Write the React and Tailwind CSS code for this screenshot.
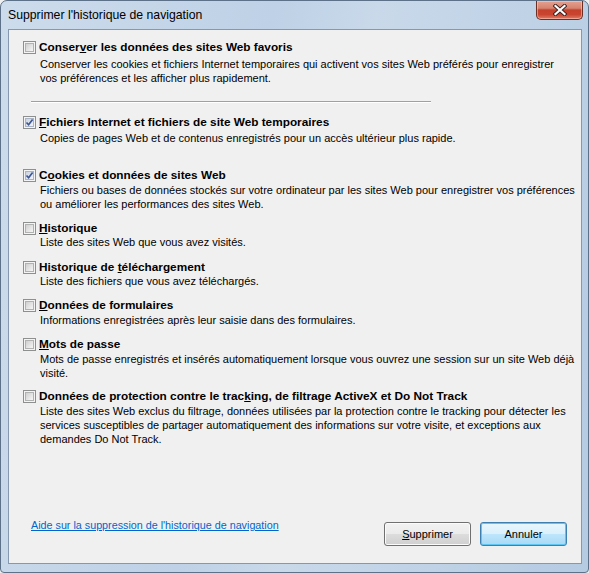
import React from 'react'

const ITEMS = [
  {
    gap: 'mt-0',
    descGap: 'mt-[3px]',
    checked: false,
    label: ['Conser', 'v', 'er les données des sites Web favoris'],
    desc: [
      'Conserver les cookies et fichiers Internet temporaires qui activent vos sites Web préférés pour enregistrer',
      'vos préférences et les afficher plus rapidement.',
    ],
  },
  {
    gap: 'mt-[12px]',
    descGap: 'mt-[2px]',
    checked: true,
    label: ['', 'F', 'ichiers Internet et fichiers de site Web temporaires'],
    desc: ['Copies de pages Web et de contenus enregistrés pour un accès ultérieur plus rapide.'],
  },
  {
    gap: 'mt-[23px]',
    descGap: 'mt-px',
    checked: true,
    label: ['C', 'o', 'okies et données de sites Web'],
    desc: [
      'Fichiers ou bases de données stockés sur votre ordinateur par les sites Web pour enregistrer vos préférences',
      'ou améliorer les performances des sites Web.',
    ],
  },
  {
    gap: 'mt-[10px]',
    descGap: 'mt-0',
    checked: false,
    label: ['', 'H', 'istorique'],
    desc: ['Liste des sites Web que vous avez visités.'],
  },
  {
    gap: 'mt-[11px]',
    descGap: 'mt-0',
    checked: false,
    label: ['Historique de ', 't', 'éléchargement'],
    desc: ['Liste des fichiers que vous avez téléchargés.'],
  },
  {
    gap: 'mt-[10px]',
    descGap: 'mt-px',
    checked: false,
    label: ['', 'D', 'onnées de formulaires'],
    desc: ['Informations enregistrées après leur saisie dans des formulaires.'],
  },
  {
    gap: 'mt-[10px]',
    descGap: 'mt-px',
    checked: false,
    label: ['', 'M', 'ots de passe'],
    desc: [
      'Mots de passe enregistrés et insérés automatiquement lorsque vous ouvrez une session sur un site Web déjà',
      'visité.',
    ],
  },
  {
    gap: 'mt-[9px]',
    descGap: 'mt-px',
    checked: false,
    label: ['Données de protection contre le trac', 'k', 'ing, de filtrage ActiveX et Do Not Track'],
    desc: [
      'Liste des sites Web exclus du filtrage, données utilisées par la protection contre le tracking pour détecter les',
      'services susceptibles de partager automatiquement des informations sur votre visite, et exceptions aux',
      'demandes Do Not Track.',
    ],
  },
]

export default function App() {
  return (
    <div className="h-[573px] w-[589px] overflow-hidden bg-[#f0f0f0] font-['Liberation_Sans',Arial,sans-serif] text-[11px] text-black">
      <div className="flex h-full flex-col rounded-t-[7px] rounded-b-[4px] border border-[#5d7189] bg-[linear-gradient(100deg,#cddcec_0%,#bed1e6_40%,#c9d9ea_55%,#b5cbe2_100%)]">
        <div className="flex h-[28px] shrink-0 items-start justify-between">
          <div className="pl-[7px] pt-[7px] text-[12.25px] leading-[15px]">Supprimer l'historique de navigation</div>
          <CloseButton />
        </div>

        <div className="ml-[7px] flex h-[535px] w-[574px] flex-col border border-[#8598af] bg-[#f0f0f0]">
          <div className="pt-[10px]">
            {ITEMS.map((item, i) => (
              <React.Fragment key={i}>
                {i === 1 && (
                  <div className="ml-[22px] mt-[16px] h-[2px] w-[400px] border-t border-b border-t-[#a0a0a0] border-b-white" />
                )}
                <Option item={item} />
              </React.Fragment>
            ))}
          </div>

          <div className="mt-auto flex items-start justify-between pb-[17px] pl-[22px] pr-[14px]">
            <a href="#" className="text-[10.75px] leading-[14px] text-[#0066cc] underline">
              Aide sur la suppression de l'historique de navigation
            </a>
            <div className="mt-[4px] flex gap-[9px]">
              <button className="h-[24px] w-[87px] rounded-[3px] border border-[#707070] bg-[linear-gradient(#f2f2f2,#ebebeb_50%,#dddddd_50%,#cfcfcf)] text-[11px] shadow-[inset_0_0_0_1px_#fbfbfb]">
                <span className="underline">S</span>upprimer
              </button>
              <button className="h-[24px] w-[87px] rounded-[3px] border border-[#3c7fb1] bg-[linear-gradient(#eaf6fd,#d9f0fc_50%,#bee6fd_50%,#a7d9f5)] text-[11px] shadow-[inset_0_0_0_1px_#5fc6f3]">
                Annuler
              </button>
            </div>
          </div>
        </div>
      </div>
    </div>
  )
}

function Option({ item }) {
  const [pre, key, post] = item.label
  return (
    <div className={`flex gap-[3px] pl-[14px] ${item.gap}`}>
      <Checkbox checked={item.checked} />
      <div>
        <div className="whitespace-nowrap text-[11.8px] font-bold leading-[14px]">
          {pre}
          <span className="underline">{key}</span>
          {post}
        </div>
        <div className={`whitespace-nowrap pl-px leading-[14px] ${item.descGap}`}>
          {item.desc.map((line, i) => (
            <div key={i}>{line}</div>
          ))}
        </div>
      </div>
    </div>
  )
}

function Checkbox({ checked }) {
  return (
    <span className="mt-px flex h-[13px] w-[13px] shrink-0 items-center justify-center border border-[#8e8f8f] bg-[#f4f4f4]">
      <span
        className={`relative flex h-[9px] w-[9px] items-center justify-center border ${
          checked
            ? 'border-[#a8b3c5] bg-[linear-gradient(135deg,#cbd3e0,#f1f4f8)]'
            : 'border-[#b1b1b1] bg-[linear-gradient(135deg,#cfcfcf,#f6f6f6)]'
        }`}
      >
        {checked && (
          <svg width="9" height="9" viewBox="0 0 9 9" className="absolute -left-px -top-px">
            <path d="M1.5 4.5 L3.6 6.8 L7.6 1.6" fill="none" stroke="#3b5697" strokeWidth="1.7" />
          </svg>
        )}
      </span>
    </span>
  )
}

function CloseButton() {
  return (
    <div className="mr-[5px] flex h-[19px] w-[47px] items-center justify-center rounded-b-[5px] border border-t-0 border-[#6b2f25] bg-[linear-gradient(#e5a190,#d68370_40%,#c5412c_50%,#c9452f_75%,#e07d66)] shadow-[inset_0_0_0_1px_rgba(255,210,200,0.5)]">
      <svg width="14" height="12" viewBox="0 0 14 12">
        <path d="M2.5 2 L11.5 10 M11.5 2 L2.5 10" stroke="#3a2020" strokeWidth="4" strokeLinecap="square" />
        <path d="M2.5 2 L11.5 10 M11.5 2 L2.5 10" stroke="#ffffff" strokeWidth="2.2" strokeLinecap="square" />
      </svg>
    </div>
  )
}
